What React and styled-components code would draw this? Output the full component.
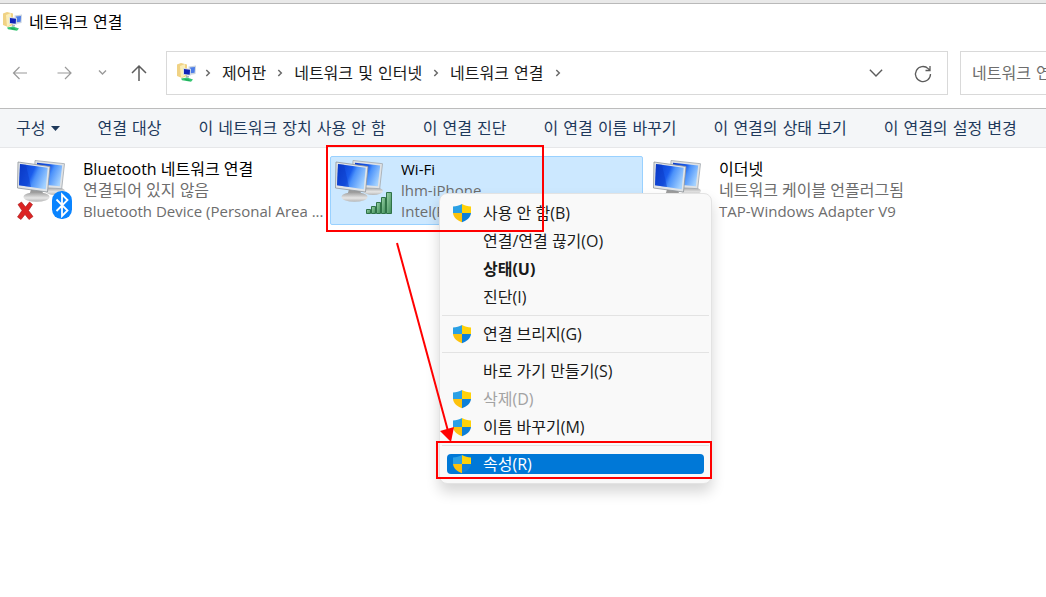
import React from 'react';
import styled, { createGlobalStyle } from 'styled-components';

const GlobalStyle = createGlobalStyle`
  * {
    box-sizing: border-box;
  }

  body {
    margin: 0;
    background: #ffffff;
    font-family: 'DejaVu Sans', 'Noto Sans CJK KR', sans-serif;
    font-size: 16px;
    line-height: 21px;
    color: #1a1a1a;
    overflow: hidden;
  }

  button, input {
    font: inherit;
  }
`;

const Window = styled.div`
  position: relative;
  min-height: 100vh;
  border-top: 3px solid #e9e9e9;
  box-shadow: inset 0 1px 0 #b9b9b9;
  overflow: hidden;
`;

const TitleBar = styled.header`
  display: flex;
  align-items: center;
  gap: 6px;
  height: 38px;
  padding: 0 3px;
`;

const Title = styled.h1`
  margin: 0;
  font-size: 16px;
  font-weight: 400;
  color: #000000;
`;

const AddressRow = styled.nav`
  display: flex;
  align-items: center;
  height: 67px;
  padding-bottom: 3px;
`;

const NavButtons = styled.div`
  display: flex;
  align-items: center;
  justify-content: space-between;
  flex: 0 0 166px;
  padding: 0 17px 0 10px;
`;

const IconButton = styled.button`
  display: flex;
  padding: 0;
  border: none;
  background: none;
  color: ${(props) => (props.$dim ? '#9a9a9a' : '#5c5c5c')};
`;

const AddressBar = styled.div`
  display: flex;
  align-items: center;
  flex: 1;
  gap: 7px;
  min-width: 0;
  height: 44px;
  padding: 0 14px 0 10px;
  border: 1px solid #d9d9d9;
`;

const Crumbs = styled.div`
  display: flex;
  align-items: center;
  flex: 1;
  gap: 10px;
  color: #6a6a6a;
  white-space: nowrap;
`;

const Crumb = styled.a`
  color: #1a1a1a;
  text-decoration: none;
`;

const AddressActions = styled.div`
  display: flex;
  align-items: center;
  gap: 30px;
`;

const Search = styled.input`
  flex: 0 0 86px;
  width: 86px;
  height: 44px;
  margin-left: 12px;
  padding: 0 0 0 11px;
  border: 1px solid #d9d9d9;
  border-right: none;
  border-radius: 0;
  background: #ffffff;
  outline: none;

  &::placeholder {
    color: #6d6d6d;
    opacity: 1;
  }
`;

const CommandBar = styled.div`
  display: flex;
  align-items: center;
  gap: 37px;
  height: 40px;
  padding: 0 16px;
  border-top: 1px solid #bcbcbc;
  border-bottom: 1px solid #e6e7e9;
  background: #f4f6f8;
`;

const Command = styled.button`
  display: flex;
  align-items: center;
  gap: 6px;
  padding: 0;
  border: none;
  background: none;
  color: #1e395b;
  white-space: nowrap;
`;

const Connections = styled.main`
  display: grid;
  grid-template-columns: repeat(auto-fill, 313px);
  gap: 5px;
  padding: 8px 12px;
`;

const Connection = styled.article`
  display: flex;
  gap: 8px;
  height: 69px;
  padding: 2px 0 2px 2px;
  border: 1px solid ${(props) => (props.$selected ? '#99d1ff' : 'transparent')};
  border-radius: 2px;
  background: ${(props) => (props.$selected ? '#cce8ff' : 'transparent')};
`;

const Details = styled.div`
  flex: 1;
  min-width: 0;
`;

const Line = styled.p`
  margin: 0;
  white-space: nowrap;
  font-family: 'Open Sans', 'Noto Sans CJK KR', sans-serif;
  font-size: ${(props) => (props.$latin ? '15px' : '16px')};
  color: ${(props) => (props.$name ? '#000000' : '#6d6d6d')};
`;

const Menu = styled.div`
  position: absolute;
  left: 439px;
  top: 190px;
  display: flex;
  flex-direction: column;
  width: 273px;
  padding: 5px 2px;
  border: 1px solid #e3e3e3;
  border-radius: 8px;
  background: #f9f9f9;
  box-shadow: 0 8px 14px rgba(0, 0, 0, 0.16);
  font-family: 'Open Sans', 'Noto Sans CJK KR', sans-serif;
`;

const MenuItem = styled.button`
  display: flex;
  align-items: center;
  gap: 11px;
  height: 20px;
  margin: 4px 5px;
  padding: 0 5px;
  border: none;
  border-radius: 4px;
  background: ${(props) => (props.$active ? '#0078d7' : 'none')};
  color: ${(props) => (props.$active ? '#ffffff' : '#1a1a1a')};
  font-weight: ${(props) => (props.$bold ? 700 : 400)};
  line-height: 20px;
  white-space: nowrap;

  &:disabled {
    color: #a3a3a3;
  }
`;

const MenuIcon = styled.span`
  display: flex;
  flex: 0 0 20px;
`;

const Divider = styled.hr`
  height: 1px;
  margin: 4px 0;
  border: none;
  background: #e3e3e3;
`;

const Highlight = styled.div`
  position: absolute;
  left: ${(props) => props.$left}px;
  top: ${(props) => props.$top}px;
  width: ${(props) => props.$width}px;
  height: ${(props) => props.$height}px;
  border: 2px solid #ff0000;
  pointer-events: none;
`;

const Arrow = styled.svg`
  position: absolute;
  left: 390px;
  top: 237px;
  pointer-events: none;
`;

const FolderIcon = () => (
  <svg width="20" height="20" viewBox="0 0 20 20" aria-hidden="true">
    <path d="M0 1.500L4 0l6 1.500V13l-5 2-5-2z" fill="#f0d284" />
    <path d="M3 3l5-2v11.500L4 15z" fill="#fbeeb9" />
    <path d="M11.500 3.500l7.500-1-.5 8.500-6 1z" fill="#c9d3df" />
    <path d="M13 4.500l5-.6-.4 5.800-4.600.6z" fill="#4b7ce8" />
    <path d="M6 5l8 .8-.3 7L6 11.800z" fill="#d5dde6" />
    <path d="M7 6l6 .7-.3 5L7 11z" fill="#1022b8" />
    <path d="M9 12.500l3 .4v1.600H9z" fill="#aab4bd" />
    <path d="M4 15.500l6-.9 6 2-2 2.200-9-1.600z" fill="#36c673" />
    <path d="M7 16l5 .8 1 1-4-.5z" fill="#0f9b4a" />
  </svg>
);

const Shield = () => (
  <svg width="20" height="20" viewBox="0 0 20 20" aria-hidden="true">
    <path d="M10 1C7.500 2.700 4 3.300 1 3.400V10h9z" fill="#2ba0e4" />
    <path d="M10 1c2.500 1.700 6 2.300 9 2.400V10h-9z" fill="#ffd20a" />
    <path d="M1 10c.3 4.500 4.500 7.600 9 9.200V10z" fill="#fdc20d" />
    <path d="M19 10c-.3 4.500-4.500 7.600-9 9.200V10z" fill="#0f80d8" />
  </svg>
);

const Chevron = ({ size = 8, down }) => (
  <svg width={size} height={size} viewBox="0 0 8 8" fill="none" stroke="currentColor" strokeWidth={down ? 0.8 : 1.5} aria-hidden="true">
    <path d={down ? 'M.5 2.200L4 5.700l3.500-3.500' : 'M2.300 1l3 3-3 3'} />
  </svg>
);

const SmallChevron = () => (
  <svg width="12" height="10" viewBox="0 0 12 10" fill="none" stroke="currentColor" strokeWidth="1.400" aria-hidden="true">
    <path d="M4 2.500l3.500 3.500L11 2.500" />
  </svg>
);

const ArrowIcon = ({ up, right }) => (
  <svg width="20" height="20" viewBox="0 0 20 20" fill="none" stroke="currentColor" strokeWidth={up ? 1.5 : 1.2} aria-hidden="true">
    {up && <path d="M10 18V3M3 10l7-7 7 7" />}
    {right && <path d="M5.500 10H19M13 4l6 6-6 6" />}
    {!up && !right && <path d="M17 10H3.500M9.500 4l-6 6 6 6" />}
  </svg>
);

const Refresh = () => (
  <svg width="20" height="20" viewBox="0 0 20 20" fill="none" stroke="currentColor" strokeWidth="1.300" aria-hidden="true">
    <path d="M17.500 11a7.500 7.500 0 1 1-2.300-5.400L17 7.300M17 3v4.500h-4.500" />
  </svg>
);

const NetworkIcon = ({ status }) => (
  <svg width="60" height="62" viewBox="-1 -1 60 62" aria-hidden="true">
    <defs>
      <linearGradient id="screen" x1="0" y1="0.2" x2="1" y2="0.6">
        <stop offset="0" stopColor="#0a3ccc" />
        <stop offset="0.45" stopColor="#1a5cec" />
        <stop offset="0.6" stopColor="#4c92fa" />
        <stop offset="1" stopColor="#a4d2ff" />
      </linearGradient>
      <linearGradient id="stand" x1="0" y1="0" x2="0" y2="1">
        <stop offset="0" stopColor="#9c9c9c" />
        <stop offset="0.6" stopColor="#e6e6e6" />
        <stop offset="1" stopColor="#b5b5b5" />
      </linearGradient>
      <linearGradient id="bars" x1="0" y1="0" x2="1" y2="1">
        <stop offset="0" stopColor="#9bd3a9" />
        <stop offset="1" stopColor="#3d8a57" />
      </linearGradient>
    </defs>
    <ellipse cx="39" cy="31" rx="10" ry="4" fill="url(#stand)" />
    <path d="M19 .5l29.500 3.200-2.800 25L18 27z" fill="#dfe2e5" stroke="#a2a8ae" strokeWidth="0.800" />
    <path d="M21 2.800l25.200 2.800-2.400 20.600L20 24z" fill="url(#screen)" />
    <path d="M15 29l11 1 2 7H13z" fill="#9b9b9b" />
    <ellipse cx="20.500" cy="37" rx="13" ry="4.800" fill="url(#stand)" />
    <path d="M2 2l32 4.500L31.500 32l-30-4z" fill="#e2e5e8" stroke="#8f959b" strokeWidth="0.800" />
    <path d="M4 4l27.700 3.700-2 21.600L3 25.300z" fill="url(#screen)" />
    <path d="M4 4l6 .8 5 22.300L3 25.300z" fill="#0a38c4" opacity="0.450" />
    {status === 'bluetooth' && (
      <>
        <path d="M2 44.500L5.500 42l4 5 4-5 3 2.500-4 6 4.500 6-4 3-4-5-4 5-3.500-2.500 4.500-6.500z" fill="#dc2424" stroke="#a31616" strokeWidth="0.600" />
        <rect x="36" y="31" width="20" height="28" rx="9.500" fill="#0a84ff" />
        <path d="M40.500 39.500l11 11-5.500 5.500V34.500l5.500 5.500-11 11" fill="none" stroke="#ffffff" strokeWidth="1.800" />
      </>
    )}
    {status === 'wifi' && (
      <g fill="url(#bars)" stroke="#2f7247" strokeWidth="1">
        <path d="M32.500 49.500h4v4h-4z" />
        <path d="M37.500 46.500h4v7h-4z" />
        <path d="M42.500 42.500h4v11h-4z" />
        <path d="M47.500 37.500h4v16h-4z" />
        <path d="M52.500 32.500h5v21h-5z" />
      </g>
    )}
  </svg>
);

const commands = [
  '연결 대상',
  '이 네트워크 장치 사용 안 함',
  '이 연결 진단',
  '이 연결 이름 바꾸기',
  '이 연결의 상태 보기',
  '이 연결의 설정 변경'
];

const connections = [
  { name: 'Bluetooth 네트워크 연결', state: '연결되어 있지 않음', device: 'Bluetooth Device (Personal Area ...', status: 'bluetooth' },
  { name: 'Wi-Fi', state: 'lhm-iPhone', device: 'Intel(R)', status: 'wifi', latin: true, selected: true },
  { name: '이더넷', state: '네트워크 케이블 언플러그됨', device: 'TAP-Windows Adapter V9' }
];

const menuGroups = [
  [
    { label: '사용 안 함(B)', shield: true },
    { label: '연결/연결 끊기(O)' },
    { label: '상태(U)', bold: true },
    { label: '진단(I)' }
  ],
  [{ label: '연결 브리지(G)', shield: true }],
  [
    { label: '바로 가기 만들기(S)' },
    { label: '삭제(D)', shield: true, disabled: true },
    { label: '이름 바꾸기(M)', shield: true }
  ],
  [{ label: '속성(R)', shield: true, active: true }]
];

const App = () => {
  return (
    <>
      <GlobalStyle />
      <Window>
        <TitleBar>
          <FolderIcon />
          <Title>네트워크 연결</Title>
        </TitleBar>
        <AddressRow>
          <NavButtons>
            <IconButton type="button" aria-label="뒤로" $dim><ArrowIcon /></IconButton>
            <IconButton type="button" aria-label="앞으로" $dim><ArrowIcon right /></IconButton>
            <IconButton type="button" aria-label="최근 위치" $dim><SmallChevron /></IconButton>
            <IconButton type="button" aria-label="위로"><ArrowIcon up /></IconButton>
          </NavButtons>
          <AddressBar>
            <FolderIcon />
            <Crumbs>
              <Chevron />
              <Crumb href="#control">제어판</Crumb>
              <Chevron />
              <Crumb href="#internet">네트워크 및 인터넷</Crumb>
              <Chevron />
              <Crumb href="#connections">네트워크 연결</Crumb>
              <Chevron />
            </Crumbs>
            <AddressActions>
              <IconButton type="button" aria-label="이전 위치"><Chevron size={14} down /></IconButton>
              <IconButton type="button" aria-label="새로 고침"><Refresh /></IconButton>
            </AddressActions>
          </AddressBar>
          <Search type="text" aria-label="검색" placeholder="네트워크 연결 검색" />
        </AddressRow>
        <CommandBar>
          <Command type="button">
            구성
            <svg width="9" height="5" viewBox="0 0 9 5" aria-hidden="true">
              <path d="M0 0h9L4.500 5z" fill="#1e395b" />
            </svg>
          </Command>
          {commands.map((label) => (
            <Command type="button" key={label}>{label}</Command>
          ))}
        </CommandBar>
        <Connections>
          {connections.map((item) => (
            <Connection key={item.name} $selected={item.selected}>
              <NetworkIcon status={item.status} />
              <Details>
                <Line $name $latin={item.latin}>{item.name}</Line>
                <Line $latin={item.latin}>{item.state}</Line>
                <Line $latin>{item.device}</Line>
              </Details>
            </Connection>
          ))}
        </Connections>
        <Menu role="menu">
          {menuGroups.map((group, index) => (
            <React.Fragment key={group[0].label}>
              {index > 0 && <Divider />}
              {group.map((item) => (
                <MenuItem
                  type="button"
                  role="menuitem"
                  key={item.label}
                  disabled={item.disabled}
                  $bold={item.bold}
                  $active={item.active}>
                  <MenuIcon>{item.shield && <Shield />}</MenuIcon>
                  {item.label}
                </MenuItem>
              ))}
            </React.Fragment>
          ))}
        </Menu>
        <Highlight $left={326} $top={142} $width={218} $height={87} />
        <Highlight $left={436} $top={438} $width={276} $height={38} />
        <Arrow width="80" height="210" viewBox="0 0 80 210" aria-hidden="true">
          <path d="M7 3l51 188" stroke="#ff0000" strokeWidth="2" />
          <path d="M50 191l14-4-3 15z" fill="#ff0000" />
        </Arrow>
      </Window>
    </>
  );
};

export default App;
